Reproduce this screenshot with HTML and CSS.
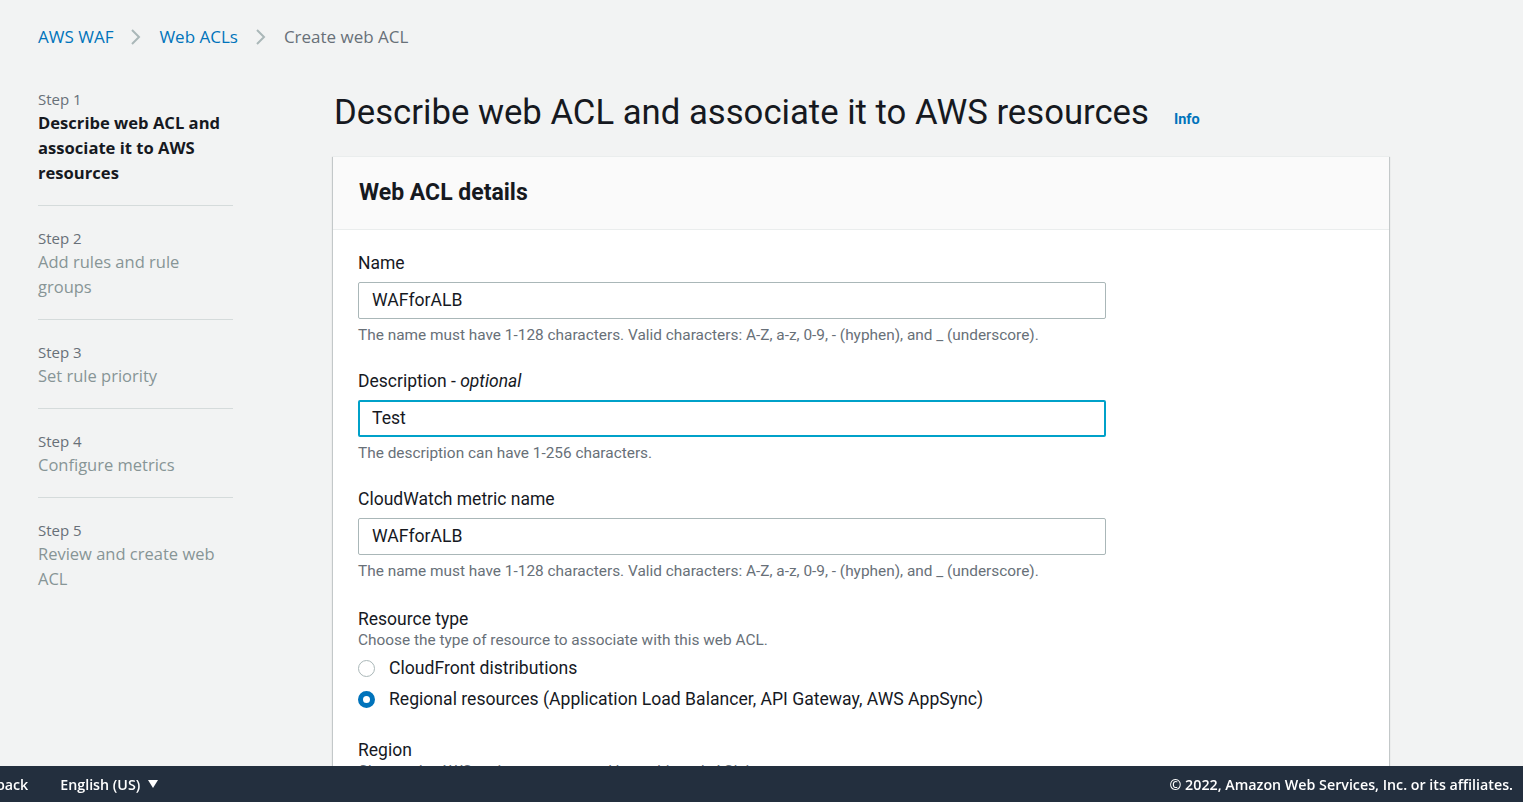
FILE: index.html
```html
<!DOCTYPE html>
<html lang="en">
<head>
<meta charset="utf-8">
<title>Create web ACL</title>
<link rel="stylesheet" href="styles.css">
</head>
<body>
<div class="page">
  <nav class="breadcrumbs">
    <a class="crumb-link" href="#">AWS WAF</a>
    <svg class="chev" width="12" height="16" viewBox="0 0 12 16"><polyline points="2,1 9,8 2,15" fill="none" stroke="#aab7b8" stroke-width="2"/></svg>
    <a class="crumb-link" href="#">Web ACLs</a>
    <svg class="chev" width="12" height="16" viewBox="0 0 12 16"><polyline points="2,1 9,8 2,15" fill="none" stroke="#aab7b8" stroke-width="2"/></svg>
    <span class="crumb-current">Create web ACL</span>
  </nav>

  <div class="layout">
    <aside class="steps">
      <div class="step">
        <div class="step-num">Step 1</div>
        <div class="step-title active">Describe web ACL and associate it to AWS resources</div>
      </div>
      <div class="step">
        <div class="step-num">Step 2</div>
        <div class="step-title">Add rules and rule groups</div>
      </div>
      <div class="step">
        <div class="step-num">Step 3</div>
        <div class="step-title">Set rule priority</div>
      </div>
      <div class="step">
        <div class="step-num">Step 4</div>
        <div class="step-title">Configure metrics</div>
      </div>
      <div class="step last">
        <div class="step-num">Step 5</div>
        <div class="step-title">Review and create web ACL</div>
      </div>
    </aside>

    <main class="main">
      <div class="title-row">
        <h1 class="title">Describe web ACL and associate it to AWS resources</h1>
        <a class="info" href="#">Info</a>
      </div>

      <section class="panel">
        <div class="panel-head">
          <h2 class="panel-title">Web ACL details</h2>
        </div>
        <div class="panel-body">
          <div class="field first">
            <div class="label">Name</div>
            <div class="input">WAFforALB</div>
            <div class="hint">The name must have 1-128 characters. Valid characters: A-Z, a-z, 0-9, - (hyphen), and _ (underscore).</div>
          </div>
          <div class="field">
            <div class="label">Description - <i>optional</i></div>
            <div class="input focused">Test</div>
            <div class="hint">The description can have 1-256 characters.</div>
          </div>
          <div class="field">
            <div class="label">CloudWatch metric name</div>
            <div class="input">WAFforALB</div>
            <div class="hint">The name must have 1-128 characters. Valid characters: A-Z, a-z, 0-9, - (hyphen), and _ (underscore).</div>
          </div>
          <div class="field wide-gap">
            <div class="label">Resource type</div>
            <div class="desc">Choose the type of resource to associate with this web ACL.</div>
            <div class="radios">
              <div class="radio-row"><span class="radio"></span><span class="radio-text">CloudFront distributions</span></div>
              <div class="radio-row"><span class="radio checked"></span><span class="radio-text">Regional resources (Application Load Balancer, API Gateway, AWS AppSync)</span></div>
            </div>
          </div>
          <div class="field region-gap">
            <div class="label">Region</div>
            <div class="desc">Choose the AWS region to create and keep this web ACL in.</div>
          </div>
        </div>
      </section>
    </main>
  </div>
</div>

<footer class="footer">
  <div class="footer-left">
    <span class="footer-item">Feedback</span>
    <span class="footer-item">English (US)<svg class="caret" width="10" height="8" viewBox="0 0 10 8"><polygon points="0,0 10,0 5,8" fill="#ffffff"/></svg></span>
  </div>
  <div class="footer-right">© 2022, Amazon Web Services, Inc. or its affiliates.</div>
</footer>
</body>
</html>
```

FILE: styles.css
```css
* { box-sizing: border-box; }

html, body {
  margin: 0;
  padding: 0;
  height: 100%;
  overflow: hidden;
}

body {
  background: #f2f3f3;
  color: #16191f;
  font-family: "Open Sans", "Noto Sans", sans-serif;
}

.page {
  padding: 25px 0 0 38px;
}

.breadcrumbs {
  display: flex;
  align-items: center;
  height: 24px;
  font-size: 17px;
  line-height: 24px;
}

.crumb-link {
  color: #0073bb;
  text-decoration: none;
}

.crumb-current {
  color: #687078;
}

.chev {
  margin: 0 17px 0 17px;
}

.layout {
  display: grid;
  grid-template-columns: 195px 1056px;
  column-gap: 100px;
  margin-top: 40px;
}

.steps {
  display: flex;
  flex-direction: column;
}

.step {
  padding: 21px 0 20px;
  border-bottom: 1px solid #d5dbdb;
}

.step:first-child {
  padding-top: 0;
  margin-top: -1px;
}

.step.last {
  border-bottom: none;
}

.step-num {
  font-size: 15px;
  line-height: 22px;
  color: #687078;
}

.step-title {
  font-size: 16.5px;
  line-height: 25px;
  color: #879596;
}

.step-title.active {
  color: #16191f;
  font-weight: 700;
  font-size: 16.6px;
}

.main {
  font-family: Roboto, "Liberation Sans", sans-serif;
}

.title-row {
  display: flex;
  align-items: baseline;
  height: 44px;
  margin-top: 1px;
  padding-left: 1px;
}

.title {
  margin: 0;
  font-size: 34.7px;
  line-height: 44px;
  font-weight: 400;
  color: #16191f;
}

.info {
  margin-left: 25px;
  font-size: 14.5px;
  font-weight: 700;
  color: #0073bb;
  text-decoration: none;
}

.panel {
  margin-top: 22px;
  background: #ffffff;
  border-top: 1px solid #eaeded;
  box-shadow: 0 1px 1px 0 rgba(0, 28, 36, 0.3), 1px 1px 1px 0 rgba(0, 28, 36, 0.15), -1px 1px 1px 0 rgba(0, 28, 36, 0.15);
  height: 700px;
}

.panel-head {
  height: 73px;
  background: #fafafa;
  border-bottom: 1px solid #eaeded;
  display: flex;
  align-items: center;
  padding-left: 26px;
}

.panel-title {
  margin: 0;
  font-size: 23px;
  font-weight: 700;
  line-height: 28px;
  color: #16191f;
}

.panel-body {
  padding: 22px 26px 0 25px;
}

.field {
  margin-top: 25px;
}

.field.first {
  margin-top: 0;
}

.field.wide-gap {
  margin-top: 27px;
}

.field.region-gap {
  margin-top: 28px;
}

.label {
  font-size: 17.5px;
  line-height: 22px;
  color: #16191f;
}

.input {
  margin-top: 8px;
  width: 748px;
  height: 37px;
  border: 1px solid #aab7b8;
  border-radius: 2px;
  padding: 0 13px;
  font-size: 17.6px;
  line-height: 35px;
  color: #16191f;
  background: #ffffff;
}

.input.focused {
  border: 2px solid #00a1c9;
  padding: 0 12px;
  line-height: 33px;
}

.hint {
  margin-top: 6px;
  font-size: 15.4px;
  line-height: 20px;
  color: #687078;
}

.desc {
  font-size: 15.4px;
  line-height: 20px;
  color: #687078;
}

.radios {
  margin-top: 6px;
  display: flex;
  flex-direction: column;
  gap: 7px;
}

.radio-row {
  display: flex;
  align-items: center;
  height: 24px;
}

.radio {
  width: 17px;
  height: 17px;
  border-radius: 50%;
  border: 1.5px solid #aab7b8;
  background: #ffffff;
  margin-right: 14px;
  flex: none;
}

.radio.checked {
  border: 5px solid #0073bb;
}

.radio-text {
  font-size: 17.6px;
  line-height: 24px;
  color: #16191f;
}

.footer {
  position: fixed;
  left: 0;
  right: 0;
  bottom: 0;
  height: 36px;
  background: #232f3e;
  color: #ffffff;
  display: flex;
  align-items: center;
  justify-content: space-between;
  font-family: "Open Sans", "Noto Sans", sans-serif;
  font-size: 14.25px;
  font-weight: 600;
  padding-right: 10px;
}

.footer-left {
  display: flex;
  align-items: center;
  gap: 32px;
  margin-left: -37px;
}

.footer-item {
  display: flex;
  align-items: center;
}

.caret {
  margin-left: 8px;
}
```
